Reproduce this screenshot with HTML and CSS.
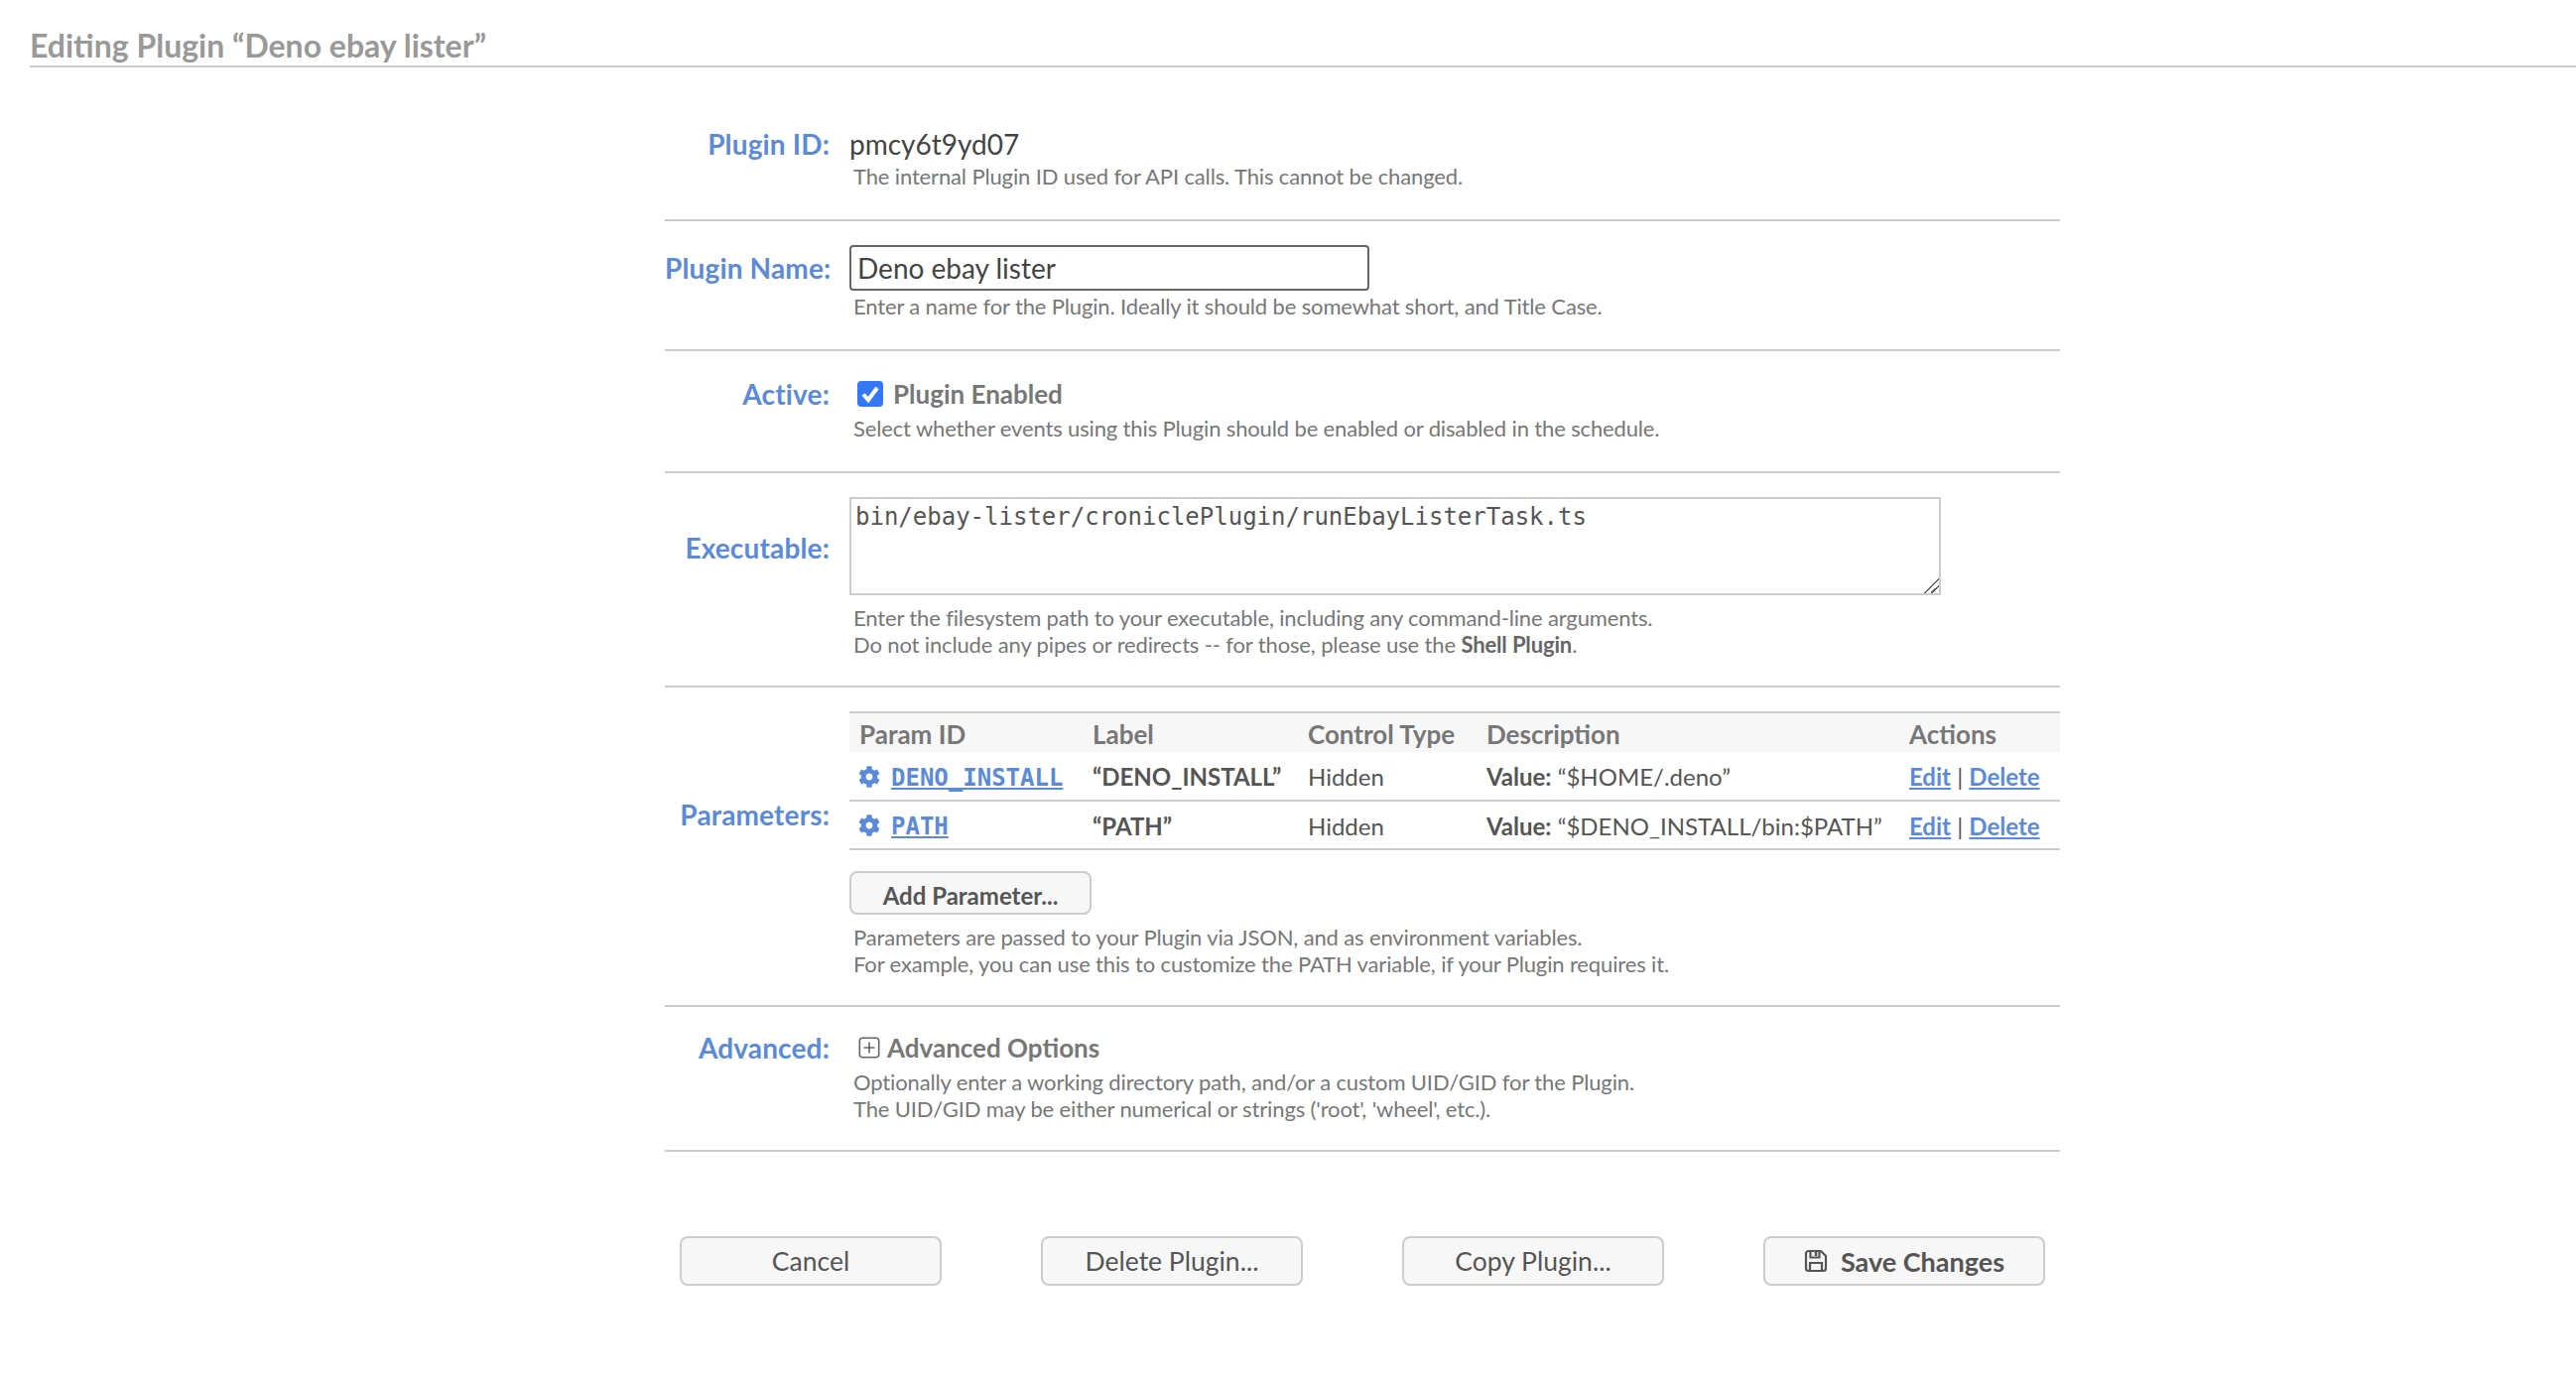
FILE: index.html
```html
<!DOCTYPE html>
<html>
  <head>
    <title>Editing Plugin</title>
    <link rel="stylesheet" href="styles.css">
  </head>
  <body>
    <svg class="defs" width="0" height="0">
      <symbol id="gear" viewBox="0 0 512 512">
        <path d="M487.4 315.7l-42.6-24.6c4.3-23.2 4.3-47 0-70.2l42.6-24.6c4.9-2.8 7.1-8.6 5.5-14-11.1-35.6-30-67.8-54.7-94.6-3.8-4.1-10-5.1-14.8-2.3L380.8 110c-17.9-15.4-38.5-27.3-60.8-35.1V25.8c0-5.6-3.9-10.5-9.4-11.7-36.7-8.2-74.3-7.8-109.2 0-5.5 1.2-9.4 6.1-9.4 11.7V75c-22.2 7.9-42.8 19.8-60.8 35.1L88.7 85.5c-4.9-2.8-11-1.9-14.8 2.3-24.7 26.7-43.6 58.9-54.7 94.6-1.7 5.4.6 11.2 5.5 14L67.3 221c-4.3 23.2-4.3 47 0 70.2l-42.6 24.6c-4.9 2.8-7.1 8.6-5.5 14 11.1 35.6 30 67.8 54.7 94.6 3.8 4.1 10 5.1 14.8 2.3l42.6-24.6c17.9 15.4 38.5 27.3 60.8 35.1v49.2c0 5.6 3.9 10.5 9.4 11.7 36.7 8.2 74.3 7.8 109.2 0 5.5-1.2 9.4-6.1 9.4-11.7v-49.2c22.2-7.9 42.8-19.8 60.8-35.1l42.6 24.6c4.9 2.8 11 1.9 14.8-2.3 24.7-26.7 43.6-58.9 54.7-94.6 1.5-5.5-.7-11.3-5.6-14.1zM256 336c-44.1 0-80-35.9-80-80s35.9-80 80-80 80 35.9 80 80-35.9 80-80 80z"/>
      </symbol>
    </svg>

    <div class="title">Editing Plugin &ldquo;Deno ebay lister&rdquo;</div>

    <form class="form" action="">
      <div class="row row-id">
        <div class="label">Plugin ID:</div>
        <div class="field">
          <div class="value">pmcy6t9yd07</div>
          <div class="caption cap-id">The internal Plugin ID used for API calls. This cannot be changed.</div>
        </div>
      </div>

      <div class="row row-name">
        <div class="label label-input">Plugin Name:</div>
        <div class="field">
          <input class="text-input" type="text" value="Deno ebay lister" autocomplete="off">
          <div class="caption cap-id">Enter a name for the Plugin. Ideally it should be somewhat short, and Title Case.</div>
        </div>
      </div>

      <div class="row row-active">
        <div class="label">Active:</div>
        <div class="field">
          <div class="check-line">
            <svg class="check" viewBox="0 0 26 26">
              <rect width="26" height="26" rx="4" fill="#3478f6"/>
              <path d="M6 13.5l5 5.5 9-12" fill="none" stroke="#fff" stroke-width="4"/>
            </svg>
            <span>Plugin Enabled</span>
          </div>
          <div class="caption cap-near">Select whether events using this Plugin should be enabled or disabled in the schedule.</div>
        </div>
      </div>

      <div class="row">
        <div class="label label-middle">Executable:</div>
        <div class="field">
          <textarea class="code-input" spellcheck="false">bin/ebay-lister/croniclePlugin/runEbayListerTask.ts</textarea>
          <div class="caption cap-far">Enter the filesystem path to your executable, including any command-line arguments.<br>Do not include any pipes or redirects -- for those, please use the <b>Shell Plugin</b>.</div>
        </div>
      </div>

      <div class="row">
        <div class="label label-middle">Parameters:</div>
        <div class="field">
          <table class="params">
            <tr>
              <th class="col-id">Param ID</th>
              <th class="col-label">Label</th>
              <th class="col-type">Control Type</th>
              <th class="col-desc">Description</th>
              <th>Actions</th>
            </tr>
            <tr>
              <td><svg class="gear"><use href="#gear"/></svg><a class="mono" href="#">DENO_INSTALL</a></td>
              <td class="strong-label">&ldquo;DENO_INSTALL&rdquo;</td>
              <td>Hidden</td>
              <td><b>Value:</b> &ldquo;$HOME/.deno&rdquo;</td>
              <td><a href="#">Edit</a> | <a href="#">Delete</a></td>
            </tr>
            <tr>
              <td><svg class="gear"><use href="#gear"/></svg><a class="mono" href="#">PATH</a></td>
              <td class="strong-label">&ldquo;PATH&rdquo;</td>
              <td>Hidden</td>
              <td><b>Value:</b> &ldquo;$DENO_INSTALL/bin:$PATH&rdquo;</td>
              <td><a href="#">Edit</a> | <a href="#">Delete</a></td>
            </tr>
          </table>
          <div class="btn btn-add">Add Parameter...</div>
          <div class="caption cap-far">Parameters are passed to your Plugin via JSON, and as environment variables.<br>For example, you can use this to customize the PATH variable, if your Plugin requires it.</div>
        </div>
      </div>

      <div class="row">
        <div class="label">Advanced:</div>
        <div class="field">
          <div class="adv-line">
            <svg class="plus" viewBox="0 0 22 22" fill="none" stroke="#666" stroke-width="1.6">
              <rect x="1.3" y="1.3" width="19.4" height="19.4" rx="3"/>
              <path d="M11 5.5v11M5.5 11h11"/>
            </svg>
            <span>Advanced Options</span>
          </div>
          <div class="caption cap-near">Optionally enter a working directory path, and/or a custom UID/GID for the Plugin.<br>The UID/GID may be either numerical or strings ('root', 'wheel', etc.).</div>
        </div>
      </div>

      <div class="buttons">
        <div class="btn btn-big">Cancel</div>
        <div class="btn btn-big">Delete Plugin...</div>
        <div class="btn btn-big">Copy Plugin...</div>
        <div class="btn btn-big btn-save">
          <svg class="save" viewBox="0 0 24 24" fill="none" stroke="#555" stroke-width="2.2">
            <path d="M2 4.500A2.500 2.500 0 0 1 4.500 2H17l5 5v12.500a2.500 2.500 0 0 1-2.500 2.500h-15A2.500 2.500 0 0 1 2 19.500z"/>
            <path d="M6.500 2v6.500h9V2M6 22v-8h12v8"/>
            <path d="M12 3v4" stroke-width="2.500"/>
          </svg>
          <span>Save Changes</span>
        </div>
      </div>
    </form>
  </body>
</html>
```

FILE: styles.css
```css
body { margin: 0; background: #fff; color: #555; font-family: Lato, "Open Sans", sans-serif; font-size: 26px; }
.defs { position: absolute; }

.title { margin-left: 30px; height: 66px; line-height: 92px; border-bottom: 2px solid #ccc; font-size: 32px; font-weight: bold; color: #999; }

.form { width: 1406px; margin-left: 670px; padding-top: 60px; }
.row { display: grid; grid-template-columns: 166px 1fr; column-gap: 20px; padding: 24px 0 28px; border-bottom: 2px solid #ccc; }
.row-id { padding: 0 0 30px; }
.row-name { padding-bottom: 30px; }
.row-active { padding: 26px 0 30px; }
.label { text-align: right; font-size: 28px; font-weight: bold; letter-spacing: 0.15px; color: #5b8bd8; line-height: 34px; white-space: nowrap; }
.label-input { line-height: 46px; }
.label-middle { align-self: center; margin-bottom: 61px; }

.value { font-size: 28px; line-height: 34px; color: #444; }
.caption { margin-left: 4px; font-size: 22px; line-height: 27px; letter-spacing: -0.14px; color: #777; }
.caption b { color: #666; }
.cap-id { margin-top: 2px; }
.cap-near { margin-top: 4px; }
.cap-far { margin-top: 9px; }

.text-input { display: block; box-sizing: border-box; width: 524px; height: 46px; margin: 0; padding: 0 6px; border: 2px solid #666; border-radius: 4px; font-family: Lato, sans-serif; font-size: 28px; color: #444; outline: none; }
.code-input { display: block; box-sizing: border-box; width: 1100px; height: 99px; margin: 0; padding: 4px; border: 2px solid #ccc; font-family: "DejaVu Sans Mono", monospace; font-size: 24px; line-height: 28px; color: #555; outline: none; }
.code-input::-webkit-resizer { background: linear-gradient(135deg, transparent 47%, #666 47% 54%, transparent 54% 70%, #666 70% 77%, transparent 77%); }

.check-line { display: flex; align-items: center; gap: 10px; margin-left: 8px; line-height: 34px; font-size: 26px; font-weight: bold; color: #777; }
.check { width: 26px; height: 26px; }

.params { width: 100%; table-layout: fixed; border-collapse: collapse; font-size: 24px; }
.params th { box-sizing: border-box; height: 40px; padding: 2px 0 0 10px; border-top: 2px solid #ccc; background: #f7f7f7; text-align: left; font-size: 26px; font-weight: bold; color: #777; }
.params td { box-sizing: border-box; height: 49px; padding: 1px 0 0 10px; border-bottom: 2px solid #ccc; color: #555; white-space: nowrap; }
.params a { color: #5b8bd8; font-weight: bold; }
.col-id { width: 235px; }
.col-label { width: 217px; }
.col-type { width: 180px; }
.col-desc { width: 426px; }
.strong-label { font-weight: bold; }
.mono { font-family: "DejaVu Sans Mono", monospace; font-size: 24px; }
.gear { width: 22px; height: 22px; margin-right: 11px; margin-left: -1px; fill: #5b8bd8; vertical-align: -2px; }

.btn { display: flex; align-items: center; justify-content: center; box-sizing: border-box; border: 2px solid #ccc; border-radius: 8px; background: #f7f7f7; color: #555; }
.btn-add { width: 244px; height: 44px; margin-top: 21px; padding-top: 4px; font-size: 24px; font-weight: bold; }

.adv-line { display: flex; align-items: center; gap: 7px; margin-left: 9px; line-height: 34px; font-size: 26px; font-weight: bold; color: #777; }
.plus { width: 22px; height: 22px; }

.buttons { display: flex; gap: 100px; margin-top: 85px; padding-left: 15px; }
.btn-big { width: 264px; height: 50px; font-size: 26.500px; }
.btn-save { width: 284px; gap: 13px; font-size: 27px; font-weight: bold; }
.save { width: 24px; height: 24px; }
```
